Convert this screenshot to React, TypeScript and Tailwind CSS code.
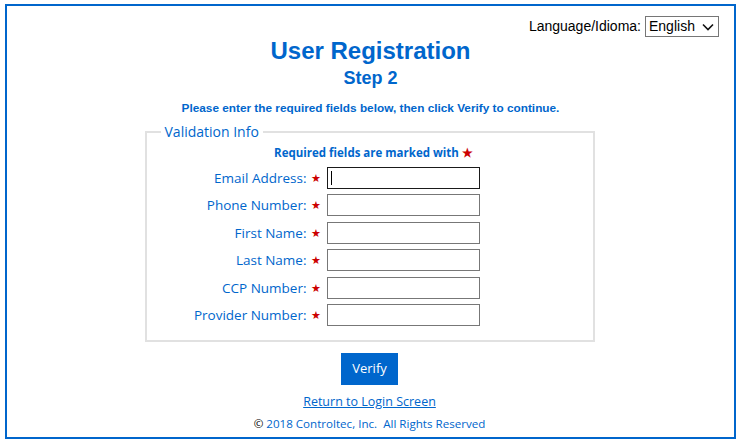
import React from "react";

const fields = [
  "Email Address:",
  "Phone Number:",
  "First Name:",
  "Last Name:",
  "CCP Number:",
  "Provider Number:",
];

const arial = { fontFamily: '"Liberation Sans", Arial, sans-serif' };
const segoe = { fontFamily: '"Open Sans", "Noto Sans", sans-serif' };

export default function App() {
  return (
    <div className="w-[739px] h-[442px] bg-white pt-[4px] pl-[5px]">
      <div className="w-[731px] h-[435px] border-2 border-[#0066cc] flex flex-col items-center">
        {/* Language picker */}
        <div
          className="self-end flex items-center gap-[4px] pt-[10px] pr-[15px] text-[14px] text-black"
          style={arial}
        >
          <span>Language/Idioma:</span>
          <div className="w-[74px] h-[21px] border border-[#767676] flex items-center justify-between pl-[3px] pr-[4px]">
            <span className="leading-[19px]">English</span>
            <svg width="12" height="8" viewBox="0 0 12 8" fill="none">
              <path d="M1 1.5 L6 6.5 L11 1.5" stroke="#111" strokeWidth="1.6" />
            </svg>
          </div>
        </div>

        {/* Heading */}
        <h1
          className="text-[24px] leading-[28px] font-bold text-[#0066cc]"
          style={arial}
        >
          User Registration
        </h1>
        <h2
          className="mt-[2px] text-[18px] leading-[22px] font-bold text-[#0066cc]"
          style={arial}
        >
          Step 2
        </h2>
        <p
          className="mt-[12px] text-[11.8px] leading-[14px] font-bold text-[#0066cc]"
          style={arial}
        >
          Please enter the required fields below, then click Verify to continue.
        </p>

        {/* Validation fieldset */}
        <fieldset
          className="mt-[8px] mr-[2px] w-[450px] border-2 border-[#e1e1e1] pb-[14px]"
          style={segoe}
        >
          <legend className="ml-[14px] px-[4px] text-[14px] leading-[18px] text-[#0066cc]">
            Validation Info
          </legend>
          <p className="mt-[4px] pl-[8px] text-center text-[11.5px] leading-[16px] font-bold text-[#0066cc]">
            Required fields are marked with{" "}
            <span className="text-[#cc0000]">★</span>
          </p>
          <div className="mt-[6px] grid grid-cols-[174px_153px] gap-x-[6px] gap-y-[5.4px]">
            {fields.map((label, i) => (
              <React.Fragment key={label}>
                <div className="flex items-center justify-end text-[13.5px] leading-[22px] text-[#0066cc]">
                  <span>{label}</span>
                  <span className="ml-[4px] text-[11px] text-[#cc0000]">★</span>
                </div>
                <div
                  className={
                    i === 0
                      ? "h-[22px] border border-[#1a1a1a] flex items-center pl-[3px]"
                      : "h-[22px] border border-[#777777]"
                  }
                >
                  {i === 0 && <span className="w-px h-[14px] bg-black" />}
                </div>
              </React.Fragment>
            ))}
          </div>
        </fieldset>

        {/* Actions */}
        <button
          type="button"
          className="mt-[11px] mr-[2px] w-[57px] h-[32px] bg-[#0066cc] text-white text-[13px]"
          style={segoe}
        >
          Verify
        </button>
        <a
          href="#"
          className="mt-[9px] mr-[2px] text-[12.5px] leading-[16px] text-[#0066cc] underline"
          style={segoe}
        >
          Return to Login Screen
        </a>
        <p
          className="mt-[6px] mr-[2px] text-[11.6px] leading-[16px] text-[#0066cc]"
          style={segoe}
        >
          <span className="text-black">©</span> 2018 Controltec, Inc.&nbsp; All Rights Reserved
        </p>
      </div>
    </div>
  );
}
